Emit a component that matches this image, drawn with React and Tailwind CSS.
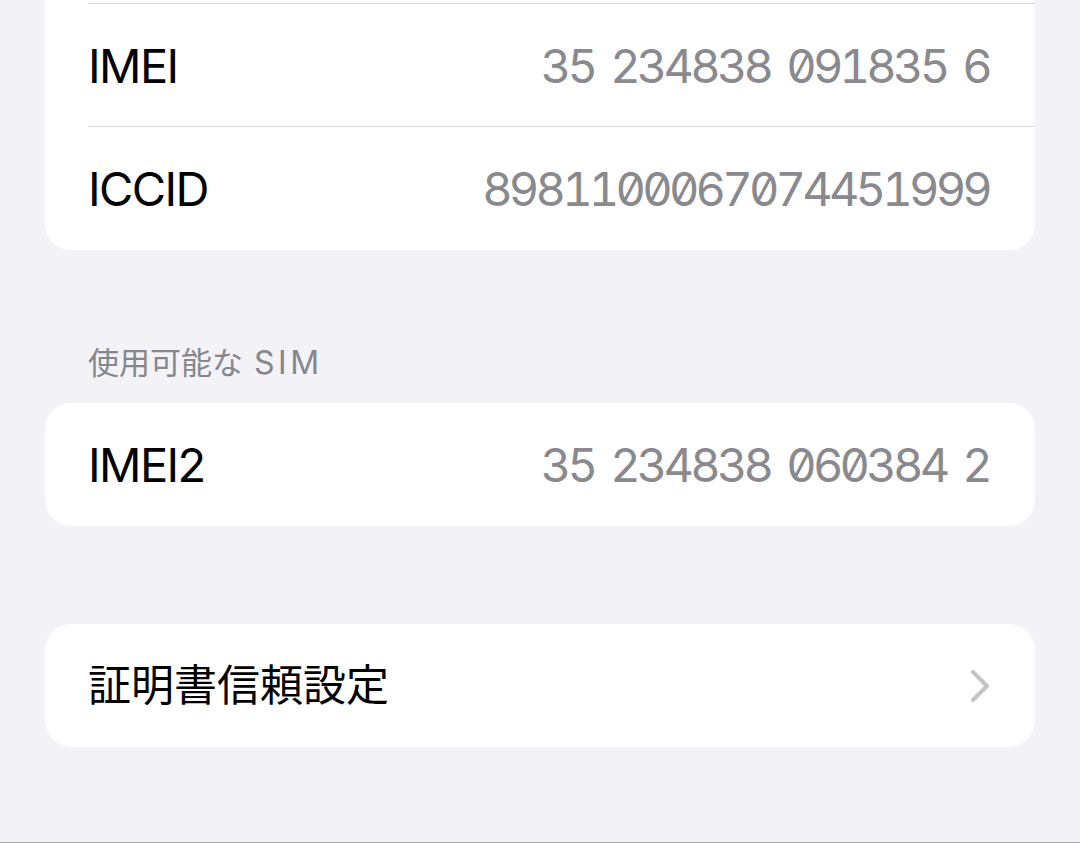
import React from "react";

const font = { fontFamily: "Inter, 'Noto Sans CJK JP', sans-serif" };

function Value({ text }) {
  const parts = text.split(" ");
  return (
    <span className="flex gap-[16px] mr-[1px] text-[47px] text-[#8a8a8e] leading-none tabular-nums slashed-zero tracking-[-3.8px]">
      {parts.map((p, i) => (
        <span key={i}>{p}</span>
      ))}
    </span>
  );
}

function Row({ label, value, last, children, labelClass }) {
  return (
    <div className={`ml-[43px] pr-[45px] flex items-center justify-between h-[123px] ${last ? "" : "border-b border-[#d9d9dc]"}`}>
      <span className={labelClass || "text-[47px] text-black leading-none tracking-[-1.6px]"}>{label}</span>
      {value && <Value text={value} />}
      {children}
    </div>
  );
}

export default function App() {
  return (
    <div className="w-[1080px] h-[843px] bg-[#f2f2f7] overflow-hidden flex flex-col border-b border-[#a9a9ab]" style={font}>
      <div className="mx-[45px] bg-white rounded-b-[26px] pt-[3px]">
        <div className="ml-[43px] border-t border-[#d9d9dc]" />
        <Row label="IMEI" value="35 234838 091835 6" />
        <Row label="ICCID" value="8981100067074451999" last />
      </div>
      <div className="mt-[97px] ml-[88px] text-[31px] text-[#86868b] leading-none h-[56px] flex items-start">
        <span>使用可能な</span>
        <span className="ml-[11px] text-[32px] tracking-[3.5px]">SIM</span>
      </div>
      <div className="mx-[45px] bg-white rounded-[26px]">
        <Row label="IMEI2" value="35 234838 060384 2" last />
      </div>
      <div className="mt-[98px] mx-[45px] bg-white rounded-[26px]">
        <Row label="証明書信頼設定" last labelClass="text-[43px] text-black leading-none">
          <svg width="20" height="34" viewBox="0 0 20 34" fill="none">
            <polyline points="3,3 17,17 3,31" stroke="#c4c4c7" strokeWidth="4.2" strokeLinecap="round" strokeLinejoin="round" />
          </svg>
        </Row>
      </div>
    </div>
  );
}
